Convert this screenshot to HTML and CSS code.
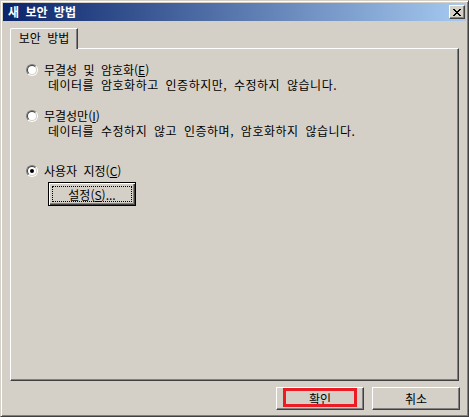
FILE: index.html
```html
<!DOCTYPE html>
<html lang="ko">
<head>
    <meta charset="UTF-8">
    <title>새 보안 방법</title>
    <link rel="stylesheet" href="styles.css">
</head>
<body>
    <div class="window">
        <div class="titlebar">
            <span class="title">새 보안 방법</span>
            <span class="close">
                <svg width="8" height="7" viewBox="0 0 8 7" shape-rendering="crispEdges">
                    <path d="M0 0h2v1h-2zM6 0h2v1h-2zM1 1h2v1h-2zM5 1h2v1h-2zM2 2h4v1h-4zM3 3h2v1h-2zM2 4h4v1h-4zM1 5h2v1h-2zM5 5h2v1h-2zM0 6h2v1h-2zM6 6h2v1h-2z" fill="#000"/>
                </svg>
            </span>
        </div>

        <div class="content">
            <div class="tabs">
                <div class="tab">보안 방법</div>
            </div>

            <div class="panel">
                <div class="option option-1">
                    <span class="radio"></span>
                    <span class="label">무결성 및 암호화(<u>E</u>)</span>
                </div>
                <div class="desc">데이터를 암호화하고 인증하지만, 수정하지 않습니다.</div>

                <div class="option option-2">
                    <span class="radio"></span>
                    <span class="label">무결성만(<u>I</u>)</span>
                </div>
                <div class="desc">데이터를 수정하지 않고 인증하며, 암호화하지 않습니다.</div>

                <div class="option option-3">
                    <span class="radio checked"></span>
                    <span class="label">사용자 지정(<u>C</u>)</span>
                </div>
                <div class="settings">
                    <span class="btn btn-focus"><span class="focus-rect">설정(<u>S</u>)...</span></span>
                </div>
            </div>

            <div class="actions">
                <span class="btn">확인<span class="mark"></span></span>
                <span class="btn">취소</span>
            </div>
        </div>
    </div>
</body>
</html>
```

FILE: styles.css
```css
html, body {
    margin: 0;
    padding: 0;
    background: #d4d0c8;
}

body {
    font-family: "Noto Sans CJK KR", sans-serif;
    font-size: 12px;
    line-height: 15px;
    color: #000;
}

u {
    text-decoration: underline;
    text-underline-offset: 1px;
}

/* Window frame */
.window {
    width: 469px;
    height: 417px;
    box-sizing: border-box;
    padding: 2px;
    border: 1px solid;
    border-color: #d4d0c8 #404040 #404040 #d4d0c8;
    box-shadow: inset 1px 1px #fff, inset -1px -1px #808080;
    background: #d4d0c8;
    display: flex;
    flex-direction: column;
}

.titlebar {
    height: 18px;
    display: flex;
    align-items: center;
    justify-content: space-between;
    padding-left: 5px;
    background: linear-gradient(to right, #0a246a, #a6caf0);
}

.title {
    color: #fff;
    font-weight: bold;
    word-spacing: 3px;
    line-height: 18px;
}

.close {
    width: 16px;
    height: 14px;
    box-sizing: border-box;
    margin-right: 1px;
    display: flex;
    align-items: center;
    justify-content: center;
    background: #d4d0c8;
    border: 1px solid;
    border-color: #fff #404040 #404040 #fff;
    box-shadow: inset -1px -1px #808080;
}

.content {
    flex: 1;
    padding: 7px 7px 0;
    display: flex;
    flex-direction: column;
}

/* Tabs */
.tabs {
    display: flex;
    height: 21px;
    margin-bottom: -1px;
    position: relative;
    z-index: 1;
}

.tab {
    width: 68px;
    box-sizing: border-box;
    border-top: 1px solid #fff;
    border-left: 1px solid #fff;
    border-right: 1px solid #404040;
    border-top-left-radius: 2px;
    box-shadow: inset -1px 0 #808080;
    background: #d4d0c8;
    text-align: center;
    line-height: 18px;
    word-spacing: 3px;
}

.panel {
    height: 333px;
    box-sizing: border-box;
    border: 1px solid;
    border-color: #fff #404040 #404040 #fff;
    box-shadow: inset -1px -1px #808080;
    padding: 13px 0 0 15px;
}

.option {
    display: flex;
    align-items: center;
    gap: 6px;
    height: 15px;
    word-spacing: 3px;
}

.option-2 {
    margin-top: 16px;
}

.option-3 {
    margin-top: 25px;
}

.desc {
    height: 15px;
    padding-left: 22px;
    word-spacing: 3px;
    letter-spacing: 0.5px;
}

/* Classic radio */
.radio {
    width: 12px;
    height: 12px;
    flex: none;
    box-sizing: border-box;
    border-radius: 50%;
    border: 1px solid;
    border-color: #808080 #fff #fff #808080;
    position: relative;
}

.radio::before {
    content: "";
    position: absolute;
    inset: 0;
    border-radius: 50%;
    border: 1px solid;
    border-color: #404040 #d4d0c8 #d4d0c8 #404040;
    background: #fff;
}

.radio.checked::after {
    content: "";
    position: absolute;
    left: 3px;
    top: 3px;
    width: 4px;
    height: 4px;
    border-radius: 50%;
    background: #000;
}

/* Buttons */
.btn {
    width: 88px;
    height: 23px;
    box-sizing: border-box;
    display: flex;
    align-items: center;
    justify-content: center;
    border: 1px solid;
    border-color: #fff #404040 #404040 #fff;
    box-shadow: inset -1px -1px #808080;
    background: #d4d0c8;
    position: relative;
}

.settings {
    margin: 4px 0 0 22px;
}

.btn-focus {
    height: 24px;
    border: 1px solid #000;
    box-shadow: inset 1px 1px #fff, inset -1px -1px #404040, inset -2px -2px #808080;
    padding: 3px;
}

.focus-rect {
    flex: 1;
    align-self: stretch;
    display: flex;
    align-items: center;
    justify-content: center;
    border: 1px dotted #000;
}

.actions {
    display: flex;
    justify-content: flex-end;
    gap: 8px;
    margin-top: 6px;
    margin-right: -1px;
}

.mark {
    position: absolute;
    left: 6px;
    top: 0;
    width: 74px;
    height: 19px;
    box-sizing: border-box;
    border: 3px solid #ed1c24;
}
```
